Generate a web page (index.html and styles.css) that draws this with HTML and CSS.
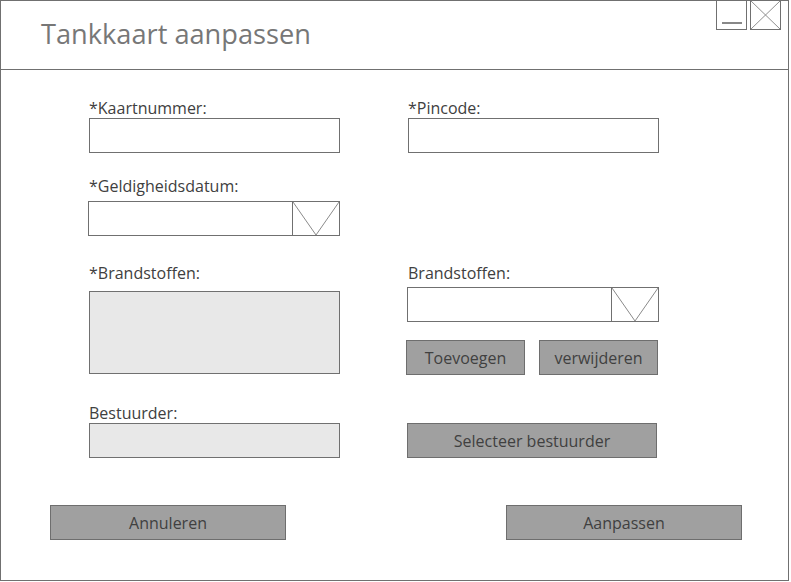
FILE: index.html
```html
<!DOCTYPE html>
<html lang="nl">
<head>
<meta charset="utf-8">
<title>Tankkaart aanpassen</title>
<link rel="stylesheet" href="styles.css">
</head>
<body>
<div class="window">
  <header class="titlebar">
    <h1 class="title">Tankkaart aanpassen</h1>
    <div class="controls">
      <div class="ctrl ctrl-min"><span class="min-bar"></span></div>
      <div class="ctrl ctrl-close">
        <svg viewBox="0 0 30 30" preserveAspectRatio="none" class="close-x">
          <line x1="0" y1="0" x2="30" y2="30"/>
          <line x1="30" y1="0" x2="0" y2="30"/>
        </svg>
      </div>
    </div>
  </header>
  <main class="content">
    <div class="row row1">
      <div class="field">
        <div class="label">*Kaartnummer:</div>
        <div class="input"></div>
      </div>
      <div class="field">
        <div class="label">*Pincode:</div>
        <div class="input"></div>
      </div>
    </div>
    <div class="row row2">
      <div class="field">
        <div class="label">*Geldigheidsdatum:</div>
        <div class="input select gap5 shift-left">
          <div class="select-arrow">
            <svg viewBox="0 0 46 33" preserveAspectRatio="none"><polyline points="0,0 23,33 46,0"/></svg>
          </div>
        </div>
      </div>
      <div class="field"></div>
    </div>
    <div class="row row3">
      <div class="field">
        <div class="label">*Brandstoffen:</div>
        <div class="listbox"></div>
      </div>
      <div class="field">
        <div class="label">Brandstoffen:</div>
        <div class="input select gap4 shift-left">
          <div class="select-arrow">
            <svg viewBox="0 0 46 33" preserveAspectRatio="none"><polyline points="0,0 23,33 46,0"/></svg>
          </div>
        </div>
        <div class="btn-pair">
          <button class="btn small">Toevoegen</button>
          <button class="btn small">verwijderen</button>
        </div>
      </div>
    </div>
    <div class="row row4">
      <div class="field">
        <div class="label">Bestuurder:</div>
        <div class="input filled"></div>
      </div>
      <div class="field">
        <button class="btn wide">Selecteer bestuurder</button>
      </div>
    </div>
  </main>
  <footer class="footer">
    <button class="btn footer-btn">Annuleren</button>
    <button class="btn footer-btn">Aanpassen</button>
  </footer>
</div>
</body>
</html>
```
FILE: styles.css
```css
* { box-sizing: border-box; }
html, body { margin: 0; padding: 0; background: #fff; }
body { font-family: "Open Sans", "Noto Sans", "DejaVu Sans", sans-serif; color: #3a3a3a; }

.window {
  width: 789px;
  height: 581px;
  border: 1px solid #707070;
  display: flex;
  flex-direction: column;
  background: #fff;
}

.titlebar {
  height: 69px;
  border-bottom: 1px solid #707070;
  display: flex;
  justify-content: space-between;
  align-items: flex-start;
  flex: none;
}
.title {
  margin: 0;
  padding: 15px 0 0 40px;
  font-size: 27.2px;
  font-weight: 400;
  line-height: 36px;
  color: #777;
}
.controls {
  display: flex;
  gap: 3px;
  margin-top: -1px;
  margin-right: 7px;
}
.ctrl {
  width: 31px;
  height: 30px;
  border: 1px solid #707070;
  display: flex;
  align-items: center;
  justify-content: center;
}
.min-bar {
  display: block;
  width: 20px;
  height: 2px;
  background: #888;
  margin-top: 16px;
}
.close-x { width: 100%; height: 100%; display: block; }
.close-x line { stroke: #8a8a8a; stroke-width: 1; }

.content {
  padding: 0 0 0 88px;
  flex: none;
}
.row {
  display: grid;
  grid-template-columns: 251px 251px;
  column-gap: 68px;
}
.row1 { margin-top: 28px; }
.row2 { margin-top: 23px; }
.row3 { margin-top: 27px; }
.row4 { margin-top: 28px; }

.label {
  font-size: 16px;
  line-height: 20px;
  height: 20px;
  color: #404040;
  white-space: nowrap;
}
.input {
  height: 35px;
  border: 1px solid #707070;
  background: #fff;
}
.input.filled { background: #e8e8e8; }
.gap5 { margin-top: 5px; }
.gap4 { margin-top: 4px; }
.shift-left { margin-left: -1px; }
.select { display: flex; justify-content: flex-end; }
.select-arrow {
  width: 47px;
  height: 100%;
  border-left: 1px solid #707070;
}
.select-arrow svg { width: 100%; height: 100%; display: block; }
.select-arrow polyline { fill: none; stroke: #8a8a8a; stroke-width: 1; }

.listbox {
  margin-top: 8px;
  height: 83px;
  border: 1px solid #707070;
  background: #e8e8e8;
}

.btn {
  font-family: inherit;
  font-size: 16px;
  color: #404040;
  background: #a0a0a0;
  border: 1px solid #6e6e6e;
  border-radius: 0;
  height: 35px;
  padding: 0;
  line-height: 20px;
}
.btn-pair {
  display: flex;
  justify-content: space-between;
  margin-top: 18px;
  margin-left: -2px;
  margin-right: 1px;
}
.btn.small { width: 119px; }
.btn.wide { width: 250px; margin-top: 20px; margin-left: -1px; }

.footer {
  display: flex;
  justify-content: space-between;
  padding: 0 46px 0 49px;
  margin-top: 47px;
}
.footer-btn { width: 236px; }
```
